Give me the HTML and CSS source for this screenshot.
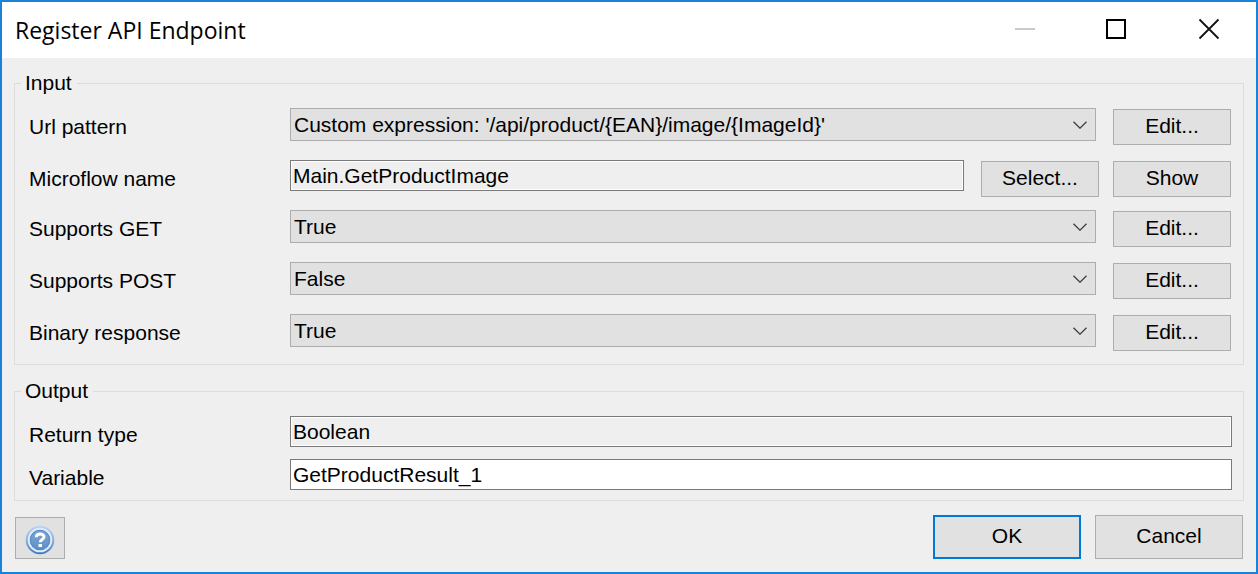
FILE: index.html
```
<!DOCTYPE html>
<html lang="en">
<head>
<meta charset="utf-8">
<meta name="viewport" content="width=device-width, initial-scale=1">
<title>Register API Endpoint</title>
<link rel="stylesheet" href="styles.css">
</head>
<body>
<div class="dialog">
  <header class="titlebar">
    <h1 class="title">Register API Endpoint</h1>
    <div class="window-controls">
      <button class="window-button" type="button" aria-label="Minimize" disabled>
        <svg width="22" height="22" viewBox="0 0 22 22"><path d="M1 11h20" stroke="#cacaca" stroke-width="2"/></svg>
      </button>
      <button class="window-button" type="button" aria-label="Maximize">
        <svg width="22" height="22" viewBox="0 0 22 22"><rect x="1" y="2" width="18" height="18" fill="none" stroke="#000" stroke-width="2"/></svg>
      </button>
      <button class="window-button" type="button" aria-label="Close">
        <svg width="22" height="22" viewBox="0 0 22 22"><path d="M1.500 1.500l19 19M20.500 1.500l-19 19" stroke="#111" stroke-width="1.800"/></svg>
      </button>
    </div>
  </header>
  <form class="content">
    <fieldset class="group group-input">
      <legend class="legend">Input</legend>
      <div class="row">
        <label class="label" for="url">Url pattern</label>
        <div class="combo">
          <select class="select" id="url"><option>Custom expression: '/api/product/{EAN}/image/{ImageId}'</option></select>
          <svg class="chevron" width="14" height="8" viewBox="0 0 14 8"><path d="M.5.7L7 7.200 13.500.7" fill="none" stroke="#404040" stroke-width="1.300"/></svg>
        </div>
        <button class="button" type="button">Edit...</button>
      </div>
      <div class="row row-compact">
        <label class="label" for="microflow">Microflow name</label>
        <input class="input" id="microflow" type="text" value="Main.GetProductImage" readonly>
        <button class="button" type="button">Select...</button>
        <button class="button button-next" type="button">Show</button>
      </div>
      <div class="row">
        <label class="label" for="get">Supports GET</label>
        <div class="combo">
          <select class="select" id="get"><option>True</option><option>False</option></select>
          <svg class="chevron" width="14" height="8" viewBox="0 0 14 8"><path d="M.5.7L7 7.200 13.500.7" fill="none" stroke="#404040" stroke-width="1.300"/></svg>
        </div>
        <button class="button" type="button">Edit...</button>
      </div>
      <div class="row">
        <label class="label" for="post">Supports POST</label>
        <div class="combo">
          <select class="select" id="post"><option>False</option><option>True</option></select>
          <svg class="chevron" width="14" height="8" viewBox="0 0 14 8"><path d="M.5.7L7 7.200 13.500.7" fill="none" stroke="#404040" stroke-width="1.300"/></svg>
        </div>
        <button class="button" type="button">Edit...</button>
      </div>
      <div class="row">
        <label class="label" for="binary">Binary response</label>
        <div class="combo">
          <select class="select" id="binary"><option>True</option><option>False</option></select>
          <svg class="chevron" width="14" height="8" viewBox="0 0 14 8"><path d="M.5.7L7 7.200 13.500.7" fill="none" stroke="#404040" stroke-width="1.300"/></svg>
        </div>
        <button class="button" type="button">Edit...</button>
      </div>
    </fieldset>
    <fieldset class="group group-output">
      <legend class="legend">Output</legend>
      <div class="row">
        <label class="label" for="type">Return type</label>
        <input class="input" id="type" type="text" value="Boolean" readonly>
      </div>
      <div class="row">
        <label class="label" for="variable">Variable</label>
        <input class="input" id="variable" type="text" value="GetProductResult_1">
      </div>
    </fieldset>
    <footer class="footer">
      <button class="help" type="button" aria-label="Help">
        <svg width="30" height="30" viewBox="0 0 30 30">
          <defs>
            <linearGradient id="ring" x1="0" y1="0" x2="0" y2="1"><stop offset="0" stop-color="#bcd6f3"/><stop offset=".5" stop-color="#8db1e0"/><stop offset="1" stop-color="#3f76ba"/></linearGradient>
            <linearGradient id="disc" x1="0" y1="0" x2="0" y2="1"><stop offset="0" stop-color="#7fa6d6"/><stop offset="1" stop-color="#5a8fc9"/></linearGradient>
          </defs>
          <circle cx="15" cy="15" r="14.300" fill="url(#ring)"/>
          <circle cx="15" cy="15" r="11.300" fill="url(#disc)" stroke="#dceafb" stroke-width="2"/>
          <circle cx="15" cy="15" r="9.600" fill="none" stroke="#5688c4" stroke-width="1"/>
          <path d="M11.300 12.200C11.300 8 19 8 19 11.800c0 2.700-3.700 2.700-3.700 5.400" fill="none" stroke="#fff" stroke-width="3"/>
          <rect x="13.500" y="19" width="3.500" height="3" fill="#fff"/>
        </svg>
      </button>
      <div class="actions">
        <button class="action action-default" type="submit">OK</button>
        <button class="action" type="button">Cancel</button>
      </div>
    </footer>
  </form>
</div>
</body>
</html>
```
FILE: styles.css
```
* {
  box-sizing: border-box;
}

body {
  margin: 0;
  color: #000;
  font-family: "Liberation Sans", Arial, sans-serif;
  font-size: 21px;
  line-height: 24px;
}

button,
input,
select {
  margin: 0;
  border-radius: 0;
  color: inherit;
  font: inherit;
}

svg {
  display: block;
}

.dialog {
  min-height: 100vh;
  border: 2px solid #1a82d8;
  background: #efefef;
}

.titlebar {
  display: flex;
  align-items: center;
  justify-content: space-between;
  height: 56px;
  padding: 0 1px 0 13px;
  background: #fff;
}

.title {
  margin: 0;
  font-family: "Segoe UI", "Open Sans", sans-serif;
  font-size: 23px;
  font-weight: 400;
  line-height: 30px;
}

.window-controls {
  display: flex;
}

.window-button {
  display: flex;
  align-items: center;
  justify-content: center;
  width: 92px;
  height: 56px;
  padding: 0 0 2px;
  border: 0;
  background: transparent;
}

.content {
  padding: 13px 12px;
}

.group {
  min-width: 0;
  margin: 0;
  padding: 13px 11px 13px 14px;
  border: 1px solid #dcdcdc;
}

.group-input {
  padding-right: 12px;
}

.group-output {
  margin-top: 14px;
  padding-bottom: 4px;
}

.legend {
  margin-left: -8px;
  padding: 0 5px 0 4px;
}

.row {
  display: flex;
  align-items: flex-start;
  margin-bottom: 15px;
}

.row-compact {
  margin-bottom: 13px;
}

.group-output .row {
  margin-bottom: 6px;
}

.group .row:last-child {
  margin-bottom: 0;
}

.label {
  flex: none;
  width: 261px;
  line-height: 37px;
}

.combo {
  position: relative;
  flex: 1;
  min-width: 0;
}

.select {
  display: block;
  width: 100%;
  height: 33px;
  padding: 0 32px 0 3px;
  border: 1px solid #adadad;
  background: #e1e1e1;
  appearance: none;
}

.chevron {
  position: absolute;
  top: 13px;
  right: 9px;
  pointer-events: none;
}

.input {
  flex: 1;
  min-width: 0;
  height: 31px;
  padding: 0 2px;
  border: 1px solid #7a7a7a;
  background: #fff;
}

.input:read-only {
  background: #efefef;
  box-shadow: inset 0 0 0 1px #fff;
}

.button {
  flex: none;
  width: 118px;
  height: 36px;
  margin: 1px 0 0 17px;
  padding: 0 0 2px;
  border: 1px solid #adadad;
  background: #e1e1e1;
}

.button-next {
  margin-left: 14px;
}

.footer {
  display: flex;
  align-items: flex-end;
  justify-content: space-between;
  margin-top: 14px;
  padding: 0 1px;
}

.help {
  display: flex;
  align-items: center;
  justify-content: center;
  width: 50px;
  height: 42px;
  padding: 3px 0 0;
  border: 1px solid #adadad;
  background: #e1e1e1;
}

.actions {
  display: flex;
  gap: 14px;
}

.action {
  width: 148px;
  height: 44px;
  padding: 0 0 2px;
  border: 1px solid #adadad;
  background: #e1e1e1;
}

.action-default {
  border: 2px solid #0078d7;
}
```
